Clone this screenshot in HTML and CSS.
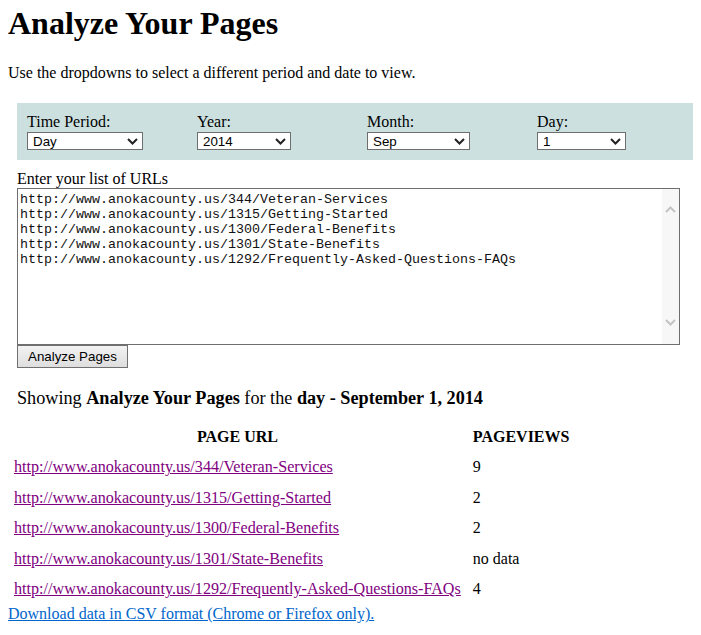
FILE: index.html
```html
<!DOCTYPE html>
<html>
<head>
<meta charset="utf-8">
<title>Analyze Your Pages</title>
<link rel="stylesheet" href="styles.css">
</head>
<body>
<h1 class="title">Analyze Your Pages</h1>
<p class="intro">Use the dropdowns to select a different period and date to view.</p>
<div class="form">
  <div class="filters">
    <div class="field">
      <span class="label">Time Period:</span>
      <div class="select w-period"><span>Day</span><svg class="chev" width="11" height="7" viewBox="0 0 11 7"><polyline points="1,1 5.5,5.5 10,1" fill="none" stroke="#222" stroke-width="2"/></svg></div>
    </div>
    <div class="field">
      <span class="label">Year:</span>
      <div class="select w-year"><span>2014</span><svg class="chev" width="11" height="7" viewBox="0 0 11 7"><polyline points="1,1 5.5,5.5 10,1" fill="none" stroke="#222" stroke-width="2"/></svg></div>
    </div>
    <div class="field">
      <span class="label">Month:</span>
      <div class="select w-month"><span>Sep</span><svg class="chev" width="11" height="7" viewBox="0 0 11 7"><polyline points="1,1 5.5,5.5 10,1" fill="none" stroke="#222" stroke-width="2"/></svg></div>
    </div>
    <div class="field">
      <span class="label">Day:</span>
      <div class="select w-day"><span>1</span><svg class="chev" width="11" height="7" viewBox="0 0 11 7"><polyline points="1,1 5.5,5.5 10,1" fill="none" stroke="#222" stroke-width="2"/></svg></div>
    </div>
  </div>
  <div class="urls-label">Enter your list of URLs</div>
  <div class="textarea">
    <pre class="urls">http://www.anokacounty.us/344/Veteran-Services
http://www.anokacounty.us/1315/Getting-Started
http://www.anokacounty.us/1300/Federal-Benefits
http://www.anokacounty.us/1301/State-Benefits
http://www.anokacounty.us/1292/Frequently-Asked-Questions-FAQs</pre>
    <div class="scroll">
      <svg width="11" height="7" viewBox="0 0 11 7"><polyline points="1,6 5.5,1.5 10,6" fill="none" stroke="#c4c4c4" stroke-width="2"/></svg>
      <svg width="11" height="7" viewBox="0 0 11 7"><polyline points="1,1 5.5,5.5 10,1" fill="none" stroke="#c4c4c4" stroke-width="2"/></svg>
    </div>
  </div>
  <button class="btn" type="button">Analyze Pages</button>
  <h3 class="showing">Showing <b>Analyze Your Pages</b> for the <b>day - September 1, 2014</b></h3>
</div>
<table class="results">
  <thead>
    <tr><th class="c-url">PAGE URL</th><th class="c-views">PAGEVIEWS</th></tr>
  </thead>
  <tbody>
    <tr><td class="c-url"><a href="#">http://www.anokacounty.us/344/Veteran-Services</a></td><td class="c-views">9</td></tr>
    <tr><td class="c-url"><a href="#">http://www.anokacounty.us/1315/Getting-Started</a></td><td class="c-views">2</td></tr>
    <tr><td class="c-url"><a href="#">http://www.anokacounty.us/1300/Federal-Benefits</a></td><td class="c-views">2</td></tr>
    <tr><td class="c-url"><a href="#">http://www.anokacounty.us/1301/State-Benefits</a></td><td class="c-views">no data</td></tr>
    <tr><td class="c-url"><a href="#">http://www.anokacounty.us/1292/Frequently-Asked-Questions-FAQs</a></td><td class="c-views">4</td></tr>
  </tbody>
</table>
<a class="download" href="#">Download data in CSV format (Chrome or Firefox only).</a>
</body>
</html>
```
FILE: styles.css
```css
html { background: #ffffff; }
body {
  margin: 5px 8px 8px 8px;
  font-family: "Liberation Serif", "Times New Roman", serif;
  font-size: 16px;
  color: #000;
}
.title {
  font-size: 32px;
  font-weight: bold;
  margin: 0 0 22.44px 0;
}
.intro {
  margin: 0 0 21px 0;
}
.form {
  width: 680px;
  margin-left: 9px;
}
.filters {
  box-sizing: border-box;
  background: #cde0e0;
  padding: 10px 0 10px 10px;
  display: flex;
}
.field {
  width: 170px;
  flex-shrink: 0;
  display: flex;
  flex-direction: column;
  gap: 1px;
}
.label {
  line-height: normal;
}
.select {
  box-sizing: border-box;
  height: 18px;
  border: 1px solid #6e6e6e;
  background: #fff;
  display: flex;
  align-items: center;
  justify-content: space-between;
  padding: 0 4px 0 5px;
  font-family: "Liberation Sans", Arial, sans-serif;
  font-size: 13.33px;
  color: #000;
}
.chev { display: block; }
.w-period { width: 116px; }
.w-year { width: 94px; }
.w-month { width: 103px; }
.w-day { width: 89px; }
.urls-label {
  margin-top: 10px;
}
.textarea {
  width: 663px;
  height: 157px;
  box-sizing: border-box;
  border: 1px solid #6e6e6e;
  display: flex;
  background: #fff;
}
.urls {
  flex: 1;
  margin: 0;
  padding: 3px 2px;
  font-family: "Liberation Mono", "Courier New", monospace;
  font-size: 13.33px;
  line-height: 15px;
  color: #111;
}
.scroll {
  width: 17px;
  background: #f7f7f7;
  display: flex;
  flex-direction: column;
  justify-content: space-between;
  align-items: center;
  padding: 17px 0 18px 0;
}
.scroll svg { display: block; }
.btn {
  display: block;
  box-sizing: border-box;
  height: 23px;
  margin: 0;
  padding: 0 10px;
  border: 1px solid #707070;
  border-radius: 0;
  background: linear-gradient(#f2f2f2, #dedede);
  font-family: "Liberation Sans", Arial, sans-serif;
  font-size: 13.33px;
  color: #000;
}
.showing {
  font-size: 18.2px;
  font-weight: normal;
  margin: 20px 0 11px 0;
}
.results {
  border-spacing: 2px;
}
.results th, .results td {
  padding: 5.25px 4px;
  text-align: left;
}
.results th {
  font-weight: bold;
}
.results th.c-url { text-align: center; }
.results .c-views { padding-left: 6px; }
.results a { color: #800080; font-size: 16.15px; }
.download {
  color: #0066cc;
  display: block;
  width: max-content;
}
```
